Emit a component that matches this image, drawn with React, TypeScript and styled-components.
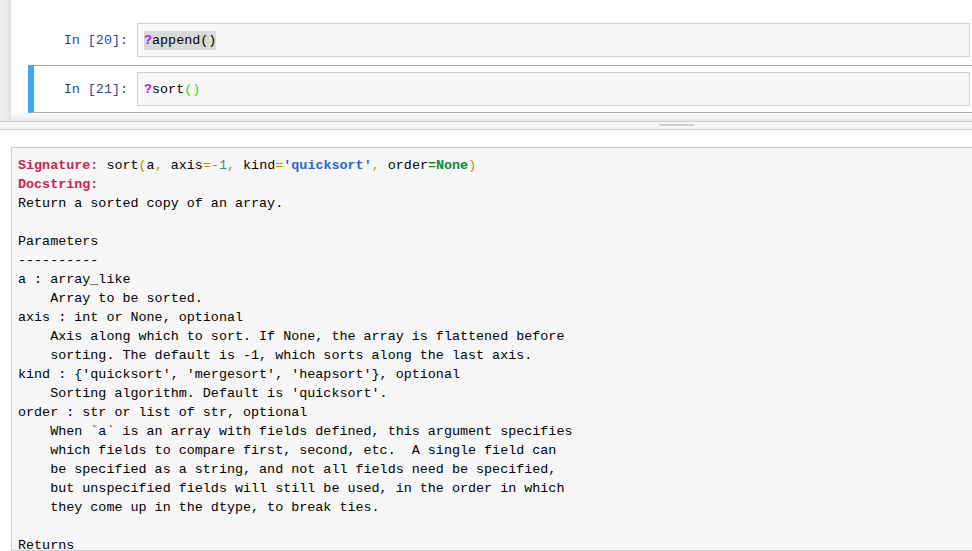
import React from 'react';
import styled, { createGlobalStyle } from 'styled-components';

const GlobalStyle = createGlobalStyle`
  html, body {
    margin: 0;
    padding: 0;
    background: #eeeeee;
    overflow: hidden;
  }
  body {
    width: 972px;
    height: 551px;
    font-family: "Liberation Mono", "DejaVu Sans Mono", monospace;
  }
`;

const MONO = `"Liberation Mono", "DejaVu Sans Mono", monospace`;

const Page = styled.div`
  display: flex;
  flex-direction: column;
  height: 551px;
  overflow: hidden;
`;

const Site = styled.div`
  display: flex;
  height: 121px;
  flex-shrink: 0;
`;

const Gutter = styled.div`
  width: 11px;
  flex-shrink: 0;
  background: linear-gradient(to right, #efefef 0%, #ebebeb 70%, #e0e0e0 100%);
`;

const Notebook = styled.div`
  flex: 1;
  display: flex;
  flex-direction: column;
  background: #ffffff;
  padding-top: 16px;
  min-width: 0;
`;

const Cell = styled.div<{ selected?: boolean }>`
  display: flex;
  align-items: flex-start;
  margin-left: 17px;
  margin-right: -4px;
  padding: 6px 5px 6px 0;
  border: 1px solid ${({ selected }) => (selected ? '#ababab' : 'transparent')};
  border-left: 6px solid ${({ selected }) => (selected ? '#42a5f5' : 'transparent')};
  margin-top: ${({ selected }) => (selected ? '1px' : '0')};
`;

const Prompt = styled.div`
  width: 103px;
  flex-shrink: 0;
  box-sizing: border-box;
  padding-right: 9px;
  padding-top: 8px;
  text-align: right;
  font-family: ${MONO};
  font-size: 13.4px;
  line-height: 19px;
  color: #303f9f;
  white-space: pre;
`;

const InputArea = styled.div`
  flex: 1;
  box-sizing: border-box;
  height: 34px;
  background: #f7f7f7;
  border: 1px solid #cfcfcf;
  padding: 7px 6px 0 6px;
  font-family: ${MONO};
  font-size: 13.4px;
  line-height: 19px;
  color: #000;
  white-space: pre;
`;

const Selected = styled.span`
  background: #d9d9d9;
  display: inline-block;
`;

const Magic = styled.span`
  color: #aa22ff;
  font-weight: bold;
`;

const MatchBracket = styled.span`
  color: #22dd22;
`;

const Shade = styled.div`
  margin-top: auto;
  height: 8px;
  background: linear-gradient(to bottom, #fbfbfb 0%, #f3f3f3 50%, #e9e9e9 100%);
`;

const PagerBar = styled.div`
  height: 7px;
  background: #f5f5f5;
  border-top: 1px solid #cccccc;
  border-bottom: 1px solid #cccccc;
  display: flex;
  flex-shrink: 0;
`;

const Handle = styled.div`
  width: 35px;
  height: 2px;
  margin-top: 2px;
  margin-left: 659px;
  background: #d0d0d0;
`;

const PagerArea = styled.div`
  flex: 1;
  background: #ffffff;
  padding: 17px 0 0 11px;
  min-height: 0;
`;

const PagerBox = styled.pre`
  margin: 0 -4px 0 0;
  height: 100%;
  box-sizing: border-box;
  background: #f7f7f7;
  border: 1px solid #cfcfcf;
  padding: 8px 6px;
  font-family: ${MONO};
  font-size: 13.4px;
  line-height: 19px;
  color: #000;
  overflow: hidden;
  white-space: pre;
`;

const Label = styled.span`
  color: #c9264f;
  font-weight: bold;
`;

const Tok = styled.span<{ kind: 'punct' | 'num' | 'str' | 'kw' }>`
  color: ${({ kind }) =>
    kind === 'punct' ? '#c08a00' : kind === 'num' ? '#1c9a8c' : kind === 'str' ? '#1f66d6' : '#0a8a3a'};
  font-weight: ${({ kind }) => (kind === 'kw' || kind === 'str' ? 'bold' : 'normal')};
`;

const docLines = [
  'Return a sorted copy of an array.',
  '',
  'Parameters',
  '----------',
  'a : array_like',
  '    Array to be sorted.',
  'axis : int or None, optional',
  '    Axis along which to sort. If None, the array is flattened before',
  '    sorting. The default is -1, which sorts along the last axis.',
  "kind : {'quicksort', 'mergesort', 'heapsort'}, optional",
  "    Sorting algorithm. Default is 'quicksort'.",
  'order : str or list of str, optional',
  '    When `a` is an array with fields defined, this argument specifies',
  '    which fields to compare first, second, etc.  A single field can',
  '    be specified as a string, and not all fields need be specified,',
  '    but unspecified fields will still be used, in the order in which',
  '    they come up in the dtype, to break ties.',
  '',
  'Returns',
];

export default function App() {
  return (
    <>
      <GlobalStyle />
      <Page>
        <Site>
          <Gutter />
          <Notebook>
            <Cell>
              <Prompt>In [20]:</Prompt>
              <InputArea>
                <Selected>
                  <Magic>?</Magic>append()
                </Selected>
              </InputArea>
            </Cell>
            <Cell selected>
              <Prompt>In [21]:</Prompt>
              <InputArea>
                <Magic>?</Magic>sort<MatchBracket>()</MatchBracket>
              </InputArea>
            </Cell>
            <Shade />
          </Notebook>
        </Site>
        <PagerBar>
          <Handle />
        </PagerBar>
        <PagerArea>
          <PagerBox>
            <Label>Signature:</Label> sort<Tok kind="punct">(</Tok>a<Tok kind="punct">,</Tok> axis
            <Tok kind="punct">=-</Tok>
            <Tok kind="num">1</Tok>
            <Tok kind="punct">,</Tok> kind<Tok kind="punct">=</Tok>
            <Tok kind="str">'quicksort'</Tok>
            <Tok kind="punct">,</Tok> order<Tok kind="kw">=None</Tok>
            <Tok kind="punct">)</Tok>
            {'\n'}
            <Label>Docstring:</Label>
            {'\n'}
            {docLines.join('\n')}
          </PagerBox>
        </PagerArea>
      </Page>
    </>
  );
}
